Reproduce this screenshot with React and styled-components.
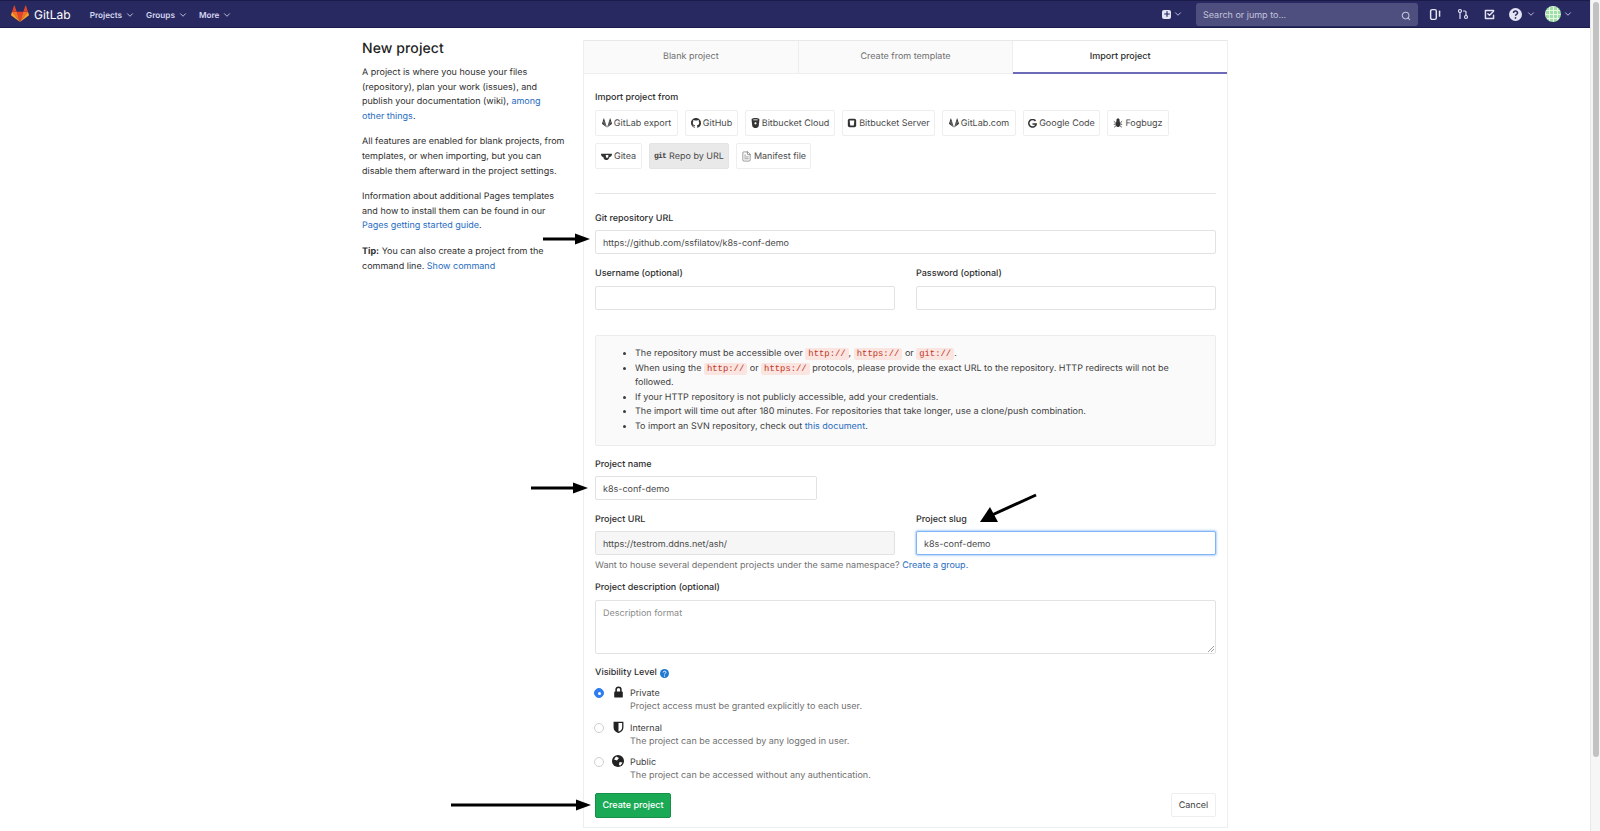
import React from "react";
import styled, { createGlobalStyle } from "styled-components";
import { ChevronDown, Search, Plus, FileText, GitPullRequest } from "lucide-react";

const GlobalStyle = createGlobalStyle`
  html, body { margin: 0; padding: 0; background: #fff; overflow: hidden; }
  body {
    font-family: Inter, "Noto Sans", "Liberation Sans", sans-serif;
    font-size: 9px;
    color: #2e2e2e;
    text-rendering: geometricPrecision;
  }
  * { box-sizing: border-box; }
`;

const Page = styled.div`
  position: relative;
  display: flex;
  width: 1600px;
  height: 831px;
  overflow: hidden;
`;
const Viewport = styled.div`
  width: 1590px;
  display: flex;
  flex-direction: column;
`;
const ScrollTrack = styled.div`
  width: 10px;
  background: #f6f6f6;
  border-left: 1px solid #e8e8e8;
  padding: 2px 1px 0 2px;
`;
const ScrollThumb = styled.div`
  height: 755px;
  border-radius: 4px;
  background: #c2c2c2;
`;

const Navbar = styled.header`
  height: 28px;
  flex: none;
  background: #292961;
  border-top: 1px solid #1b1b4a;
  border-bottom: 1px solid #1b1b4a;
  display: flex;
  align-items: center;
  padding: 0 0 0 11px;
  color: #d1d1f0;
`;
const Brand = styled.div`
  display: flex;
  flex: none;
  align-items: center;
  gap: 5px;
  color: #fff;
  font-size: 12px;
  margin-right: 19px;
`;
const NavMenu = styled.div`
  display: flex;
  align-items: center;
  gap: 3px;
  padding-top: 1px;
  font-size: 8.2px;
  font-weight: 600;
  margin-right: 11px;
  color: #d6d6f0;
`;
const NavRight = styled.div`
  margin-left: auto;
  display: flex;
  align-items: center;
`;
const NewButton = styled.div`
  display: flex;
  align-items: center;
  gap: 2px;
  margin-right: 13px;
`;
const PlusBox = styled.span`
  width: 9px;
  height: 9px;
  background: #e4e4f4;
  border-radius: 2px;
  display: flex;
  align-items: center;
  justify-content: center;
  color: #292961;
`;
const SearchBox = styled.div`
  width: 222px;
  height: 23px;
  background: #4f4f7f;
  border-radius: 3px;
  display: flex;
  align-items: center;
  justify-content: space-between;
  padding: 3px 7px 0;
  color: #c4c4de;
  margin-right: 10px;
`;
const NavIcon = styled.span`
  width: 14px;
  display: flex;
  justify-content: center;
  margin-right: ${(p) => p.$gap ?? 13}px;
  align-items: center;
`;
const Avatar = styled.span`
  width: 16px;
  height: 16px;
  border-radius: 50%;
  margin-right: 2px;
  background-color: #9fe0a4;
  background-image: linear-gradient(#e6f7e8 1px, transparent 1px), linear-gradient(90deg, #e6f7e8 1px, transparent 1px);
  background-size: 4px 4px;
`;
const AvatarWrap = styled.div`
  display: flex;
  align-items: center;
  margin-right: 17px;
`;

const Content = styled.main`
  flex: 1;
  display: flex;
  align-items: flex-start;
  padding: 12px 0 0 362px;
`;
const Aside = styled.aside`
  width: 203px;
  margin-right: 18px;
  line-height: 14.6px;
  color: #2e2e2e;
`;
const Title = styled.h1`
  font-size: 14px;
  font-weight: 500;
  line-height: 17px;
  margin: 0 0 9px;
  color: #1f1f1f;
  letter-spacing: 0.1px;
`;
const Para = styled.p`
  margin: 0 0 11px;
`;
const Link = styled.a`
  color: #1f6cbf;
`;

const Panel = styled.section`
  width: 645px;
  height: 788px;
  border: 1px solid #eee;
  border-top-color: #e8e8e8;
`;
const Tabs = styled.div`
  display: flex;
  height: 33px;
`;
const Tab = styled.div`
  flex: 1;
  display: flex;
  align-items: center;
  justify-content: center;
  padding-bottom: 1px;
  color: ${(p) => (p.$active ? "#2e2e2e" : "#707070")};
  font-weight: ${(p) => (p.$active ? 500 : 400)};
  background: ${(p) => (p.$active ? "#fff" : "#fafafa")};
  border-right: ${(p) => (p.$active ? "none" : "1px solid #eee")};
  border-bottom: ${(p) => (p.$active ? "2px solid #6b6bb8" : "1px solid #eee")};
`;
const Body = styled.div`
  padding: 16px 11px 0 11px;
`;
const Label = styled.div`
  font-weight: 500;
  line-height: 14px;
  color: #2e2e2e;
  padding-top: 1px;
  margin-bottom: ${(p) => p.$gap ?? 4}px;
  margin-top: ${(p) => p.$top || 0}px;
  display: flex;
  align-items: center;
  gap: 3px;
`;
const ImportGrid = styled.div`
  display: flex;
  flex-wrap: wrap;
  gap: 7px;
  margin-top: 5px;
  width: 590px;
`;
const ImportButton = styled.div`
  height: 26px;
  width: ${(p) => p.$w}px;
  display: flex;
  align-items: center;
  justify-content: center;
  gap: 2px;
  color: #4a4a4a;
  white-space: nowrap;
  border: 1px solid ${(p) => (p.$active ? "#e4e4e4" : "#eee")};
  border-radius: 2px;
  background: ${(p) => (p.$active ? "#e9e9e9" : "#fff")};
`;
const Rule = styled.hr`
  border: 0;
  border-top: 1px solid #e5e5e5;
  margin: 24px 0 17px;
`;
const Input = styled.div`
  height: ${(p) => p.$h || 24}px;
  width: ${(p) => p.$w || "100%"};
  border: 1px solid ${(p) => (p.$focus ? "#7fb4f5" : "#e2e2e2")};
  border-radius: 2px;
  box-shadow: ${(p) => (p.$focus ? "0 0 2px 1px #b5d3fa" : "none")};
  background: ${(p) => (p.$disabled ? "#f6f6f6" : "#fff")};
  padding: ${(p) => (p.$area ? "7px 7px" : "2px 7px 0")};
  display: flex;
  align-items: ${(p) => (p.$area ? "flex-start" : "center")};
  color: ${(p) => (p.$muted ? "#8c8c8c" : "#4a4a4a")};
  position: relative;
`;
const ResizeGrip = styled.svg`
  position: absolute;
  right: 1px;
  bottom: 1px;
`;
const Row = styled.div`
  display: grid;
  grid-template-columns: 300px 300px;
  column-gap: 21px;
  margin-top: ${(p) => p.$top || 0}px;
`;
const InfoBox = styled.div`
  margin-top: 25px;
  height: 111px;
  background: #fafafa;
  border: 1px solid #ececec;
  border-radius: 2px;
  padding: 11px 20px 0 28px;
`;
const InfoList = styled.ul`
  margin: 0;
  padding: 0 0 0 11px;
  line-height: 14.55px;
  color: #3d3d3d;
`;
const Code = styled.code`
  font-family: "Liberation Mono", monospace;
  font-size: 8.9px;
  line-height: 1;
  color: #c0341d;
  background: #fbe5e1;
  border-radius: 2px;
  padding: 1px 3px;
`;
const HelpText = styled.div`
  margin-top: 4px;
  line-height: 13px;
  color: #707070;
`;
const RadioRow = styled.div`
  display: grid;
  grid-template-columns: 11px 24px 1fr;
  align-items: start;
  height: 34.5px;
  line-height: 13px;
`;
const Radio = styled.span`
  width: 10px;
  height: 10px;
  margin: 2px 0 0 -1px;
  border-radius: 50%;
  border: 1px solid ${(p) => (p.$on ? "#2f7df0" : "#cfcfcf")};
  background: ${(p) => (p.$on ? "#2f7df0" : "#fff")};
  display: flex;
  align-items: center;
  justify-content: center;
  &::after {
    content: "";
    width: 3px;
    height: 3px;
    border-radius: 50%;
    background: ${(p) => (p.$on ? "#fff" : "transparent")};
  }
`;
const RadioIcon = styled.span`
  display: flex;
  justify-content: center;
  color: #2e2e2e;
`;
const RadioText = styled.div`
  padding-top: 1px;
`;
const RadioTitle = styled.div`
  color: #3d3d3d;
`;
const RadioDesc = styled.div`
  color: #707070;
`;
const Actions = styled.div`
  display: flex;
  justify-content: space-between;
  align-items: center;
  margin-top: 3px;
`;
const CreateButton = styled.div`
  width: 76px;
  height: 25px;
  padding-top: 1px;
  background: #1aaa55;
  border: 1px solid #168f48;
  border-radius: 2px;
  color: #fff;
  font-weight: 500;
  display: flex;
  align-items: center;
  justify-content: center;
`;
const CancelButton = styled.div`
  width: 45px;
  height: 24px;
  padding-top: 1px;
  border: 1px solid #eee;
  border-radius: 2px;
  color: #3d3d3d;
  display: flex;
  align-items: center;
  justify-content: center;
`;
const Arrow = styled.svg`
  position: absolute;
  left: ${(p) => p.$x}px;
  top: ${(p) => p.$y}px;
`;
const GitWord = styled.span`
  font-family: "Liberation Mono", monospace;
  font-weight: 700;
  font-size: 8px;
  letter-spacing: -0.8px;
  margin-right: 1px;
  color: #444;
`;

const Tanuki = ({ size = 18, mono }) => (
  <svg width={size} height={size} viewBox="0 0 24 24">
    <path d="M12 22.5 16.4 9H7.6z" fill={mono ? "#fff" : "#e24329"} />
    <path d="M12 22.5 7.6 9H1.4z" fill={mono ? "#555" : "#fc6d26"} />
    <path d="M1.4 9 .1 13.1c-.1.4 0 .8.3 1L12 22.5z" fill={mono ? "#333" : "#fca326"} />
    <path d="M1.4 9h6.2L4.9 1c-.1-.4-.7-.4-.9 0z" fill={mono ? "#333" : "#e24329"} />
    <path d="M12 22.5 16.4 9h6.2z" fill={mono ? "#555" : "#fc6d26"} />
    <path d="M22.6 9l1.3 4.1c.1.4 0 .8-.3 1L12 22.5z" fill={mono ? "#333" : "#fca326"} />
    <path d="M22.6 9h-6.2L19.1 1c.1-.4.7-.4.9 0z" fill={mono ? "#333" : "#e24329"} />
  </svg>
);
const GithubMark = () => (
  <svg width="10" height="10" viewBox="0 0 16 16" fill="#333">
    <path d="M8 0C3.58 0 0 3.58 0 8c0 3.54 2.29 6.53 5.47 7.59.4.07.55-.17.55-.38 0-.19-.01-.82-.01-1.49-2.01.37-2.53-.49-2.69-.94-.09-.23-.48-.94-.82-1.13-.28-.15-.68-.52-.01-.53.63-.01 1.08.58 1.23.82.72 1.21 1.87.87 2.33.66.07-.52.28-.87.51-1.07-1.78-.2-3.64-.89-3.64-3.95 0-.87.31-1.59.82-2.15-.08-.2-.36-1.02.08-2.12 0 0 .67-.21 2.2.82.64-.18 1.32-.27 2-.27s1.36.09 2 .27c1.53-1.04 2.2-.82 2.2-.82.44 1.1.16 1.92.08 2.12.51.56.82 1.27.82 2.15 0 3.07-1.87 3.75-3.65 3.95.29.25.54.73.54 1.48 0 1.07-.01 1.93-.01 2.2 0 .21.15.46.55.38A8 8 0 0 0 16 8c0-4.42-3.58-8-8-8z" />
  </svg>
);
const BitbucketCloud = () => (
  <svg width="9" height="10" viewBox="0 0 12 14" fill="#333">
    <path d="M6 0C3 0 .5.8.5 2c0 .4 1 9 1.2 9.8C2 13 4.2 14 6 14s4-1 4.3-2.2c.2-.8 1.200-9.400 1.200-9.800C11.500.8 9 0 6 0z" />
    <circle cx="6" cy="7.500" r="1.600" fill="#fff" />
    <rect x="3" y="2" width="6" height="1.200" fill="#fff" />
  </svg>
);
const BitbucketServer = () => (
  <svg width="10" height="10" viewBox="0 0 12 12">
    <rect x="1" y="1" width="10" height="10" rx="2" fill="#333" />
    <path d="M3.200 3h5.600l-.7 6H3.900z" fill="#fff" />
  </svg>
);
const GoogleG = () => (
  <svg width="9" height="9" viewBox="0 0 12 12" fill="none" stroke="#333" strokeWidth="2">
    <path d="M10 2.600A5 5 0 1 0 11 6.500H6" />
  </svg>
);
const Bug = () => (
  <svg width="10" height="10" viewBox="0 0 12 12" stroke="#333" strokeWidth="1" fill="#333">
    <ellipse cx="6" cy="7" rx="2.500" ry="3.500" />
    <circle cx="6" cy="2.500" r="1.500" />
    <path d="M1 4l2 1.500M11 4L9 5.500M1 7.500h2M11 7.500H9M1.500 11l2-1.500M10.500 11l-2-1.500" fill="none" />
  </svg>
);
const GiteaMark = () => (
  <svg width="11" height="9" viewBox="0 0 14 10">
    <path d="M0 1.500h14c0 3-1.500 4-3.200 4C10.500 8 8.500 9.500 6.500 9.500 4.500 9.500 3.200 7.500 3 5.500 1 5.500 0 4 0 1.500z" fill="#333" />
    <path d="M6 3h3.500L9 6.500H6.500z" fill="#fff" />
  </svg>
);
const NavGlyph = ({ children }) => (
  <svg width="13" height="13" viewBox="0 0 16 16" fill="none" stroke="#e4e4f4" strokeWidth="1.800" strokeLinecap="round" strokeLinejoin="round">
    {children}
  </svg>
);
const LockIcon = () => (
  <svg width="11" height="12" viewBox="0 0 12 14">
    <path d="M3.200 7V4.200a2.800 2.800 0 0 1 5.600 0V7" fill="none" stroke="#222" strokeWidth="1.800" />
    <rect x="1" y="6.500" width="10" height="7" rx="1" fill="#222" />
  </svg>
);
const Shield = () => (
  <svg width="11" height="12" viewBox="0 0 12 14">
    <path d="M1 1.500h10v6c0 3-2.500 4.800-5 5.800-2.500-1-5-2.800-5-5.800z" fill="#fff" stroke="#222" strokeWidth="1.500" />
    <path d="M1 1.500h5v11.800c-2.500-1-5-2.800-5-5.800z" fill="#222" />
  </svg>
);
const Globe = () => (
  <svg width="12" height="12" viewBox="0 0 12 12">
    <circle cx="6" cy="6" r="6" fill="#222" />
    <path d="M4 1.500 7 3 5 5.500 2 4.500zM7.500 7l3 .5-2 3-1.500-.5z" fill="#fff" />
  </svg>
);
const HelpDot = () => (
  <svg width="9" height="9" viewBox="0 0 12 12">
    <circle cx="6" cy="6" r="6" fill="#1f78d1" />
    <path d="M4.200 4.600c0-2.300 3.700-2.300 3.700-.1 0 1.400-1.900 1.300-1.900 2.700" fill="none" stroke="#fff" strokeWidth="1.300" />
    <circle cx="6" cy="9.200" r=".8" fill="#fff" />
  </svg>
);

const imports = [
  { name: "GitLab export", w: 83, icon: <Tanuki size={10} mono /> },
  { name: "GitHub", w: 53, icon: <GithubMark /> },
  { name: "Bitbucket Cloud", w: 90, icon: <BitbucketCloud /> },
  { name: "Bitbucket Server", w: 93, icon: <BitbucketServer /> },
  { name: "GitLab.com", w: 74, icon: <Tanuki size={10} mono /> },
  { name: "Google Code", w: 77, icon: <GoogleG /> },
  { name: "Fogbugz", w: 62, icon: <Bug /> },
  { name: "Gitea", w: 47, icon: <GiteaMark /> },
  { name: "Repo by URL", w: 80, icon: <GitWord>git</GitWord>, active: true },
  { name: "Manifest file", w: 75, icon: <FileText size={11} strokeWidth={1.2} /> },
];

const levels = [
  { name: "Private", desc: "Project access must be granted explicitly to each user.", on: true, icon: <LockIcon /> },
  { name: "Internal", desc: "The project can be accessed by any logged in user.", icon: <Shield /> },
  { name: "Public", desc: "The project can be accessed without any authentication.", icon: <Globe /> },
];

const App = () => (
  <Page>
    <GlobalStyle />
    <Viewport>
      <Navbar>
        <Brand>
          <Tanuki size={18} />
          GitLab
        </Brand>
        <NavMenu>Projects <ChevronDown size={10} /></NavMenu>
        <NavMenu>Groups <ChevronDown size={10} /></NavMenu>
        <NavMenu>More <ChevronDown size={10} /></NavMenu>
        <NavRight>
          <NewButton>
            <PlusBox><Plus size={8} strokeWidth={3.5} /></PlusBox>
            <ChevronDown size={10} />
          </NewButton>
          <SearchBox>
            Search or jump to...
            <Search size={10} strokeWidth={2.5} />
          </SearchBox>
          <NavIcon $gap={14}>
            <NavGlyph><rect x="2" y="2" width="7" height="12" rx="2" /><path d="M13 4v6" /></NavGlyph>
          </NavIcon>
          <NavIcon $gap={12}>
            <GitPullRequest size={12} strokeWidth={2.4} color="#e4e4f4" />
          </NavIcon>
          <NavIcon $gap={12}>
            <NavGlyph><path d="M13 3H3v10h10V9" /><path d="M6 7l2 2 5-5" /></NavGlyph>
          </NavIcon>
          <NavIcon $gap={2}>
            <svg width="13" height="13" viewBox="0 0 12 12">
              <circle cx="6" cy="6" r="6" fill="#e4e4f4" />
              <path d="M4.200 4.600c0-2.300 3.700-2.300 3.700-.1 0 1.400-1.900 1.300-1.900 2.700" fill="none" stroke="#292961" strokeWidth="1.400" />
              <circle cx="6" cy="9.200" r=".8" fill="#292961" />
            </svg>
          </NavIcon>
          <NavIcon $gap={7}><ChevronDown size={10} /></NavIcon>
          <AvatarWrap>
            <Avatar />
            <ChevronDown size={10} />
          </AvatarWrap>
        </NavRight>
      </Navbar>
      <Content>
        <Aside>
          <Title>New project</Title>
          <Para>
            A project is where you house your files (repository), plan your work (issues), and publish your documentation (wiki), <Link>among other things</Link>.
          </Para>
          <Para>
            All features are enabled for blank projects, from templates, or when importing, but you can disable them afterward in the project settings.
          </Para>
          <Para>
            Information about additional Pages templates and how to install them can be found in our <Link>Pages getting started guide</Link>.
          </Para>
          <Para>
            <b>Tip:</b> You can also create a project from the command line. <Link>Show command</Link>
          </Para>
        </Aside>
        <Panel>
          <Tabs>
            <Tab>Blank project</Tab>
            <Tab>Create from template</Tab>
            <Tab $active>Import project</Tab>
          </Tabs>
          <Body>
            <Label $gap={0}>Import project from</Label>
            <ImportGrid>
              {imports.map((item) => (
                <ImportButton key={item.name} $w={item.w} $active={item.active}>
                  {item.icon}
                  {item.name}
                </ImportButton>
              ))}
            </ImportGrid>
            <Rule />
            <Label>Git repository URL</Label>
            <Input>https://github.com/ssfilatov/k8s-conf-demo</Input>
            <Row $top={12}>
              <div>
                <Label $gap={5}>Username (optional)</Label>
                <Input />
              </div>
              <div>
                <Label $gap={5}>Password (optional)</Label>
                <Input />
              </div>
            </Row>
            <InfoBox>
              <InfoList>
                <li>The repository must be accessible over <Code>http://</Code>, <Code>https://</Code> or <Code>git://</Code>.</li>
                <li>When using the <Code>http://</Code> or <Code>https://</Code> protocols, please provide the exact URL to the repository. HTTP redirects will not be followed.</li>
                <li>If your HTTP repository is not publicly accessible, add your credentials.</li>
                <li>The import will time out after 180 minutes. For repositories that take longer, use a clone/push combination.</li>
                <li>To import an SVN repository, check out <Link>this document</Link>.</li>
              </InfoList>
            </InfoBox>
            <Label $top={11}>Project name</Label>
            <Input $w="222px">k8s-conf-demo</Input>
            <Row $top={12}>
              <div>
                <Label>Project URL</Label>
                <Input $disabled>https://testrom.ddns.net/ash/</Input>
              </div>
              <div>
                <Label>Project slug</Label>
                <Input $focus>k8s-conf-demo</Input>
              </div>
            </Row>
            <HelpText>
              Want to house several dependent projects under the same namespace? <Link>Create a group.</Link>
            </HelpText>
            <Label $top={8} $gap={5}>Project description (optional)</Label>
            <Input $h={54} $area $muted>
              Description format
              <ResizeGrip width="7" height="7" viewBox="0 0 7 7" stroke="#888" strokeWidth="0.8">
                <path d="M1 7l6-6M4 7l3-3" />
              </ResizeGrip>
            </Input>
            <Label $top={11} $gap={6}>Visibility Level <HelpDot /></Label>
            {levels.map((level) => (
              <RadioRow key={level.name}>
                <Radio $on={level.on} />
                <RadioIcon>{level.icon}</RadioIcon>
                <RadioText>
                  <RadioTitle>{level.name}</RadioTitle>
                  <RadioDesc>{level.desc}</RadioDesc>
                </RadioText>
              </RadioRow>
            ))}
            <Actions>
              <CreateButton>Create project</CreateButton>
              <CancelButton>Cancel</CancelButton>
            </Actions>
          </Body>
        </Panel>
      </Content>
    </Viewport>
    <ScrollTrack><ScrollThumb /></ScrollTrack>
    <Arrow $x={541} $y={232} width="50" height="14" viewBox="0 0 50 14"><path d="M2 7h34" stroke="#000" strokeWidth="3" /><path d="M49 7 34 1.500v11z" fill="#000" /></Arrow>
    <Arrow $x={529} $y={481} width="60" height="14" viewBox="0 0 60 14"><path d="M2 7h44" stroke="#000" strokeWidth="3" /><path d="M59 7 44 1.500v11z" fill="#000" /></Arrow>
    <Arrow $x={450} $y={798} width="142" height="14" viewBox="0 0 142 14"><path d="M1 7h126" stroke="#000" strokeWidth="3" /><path d="M141 7 126 1.500v11z" fill="#000" /></Arrow>
    <Arrow $x={978} $y={492} width="60" height="32" viewBox="0 0 60 32"><path d="M58 3 14 23" stroke="#000" strokeWidth="3" /><path d="M2 30 20 30 12 15z" fill="#000" /></Arrow>
  </Page>
);

export default App;
